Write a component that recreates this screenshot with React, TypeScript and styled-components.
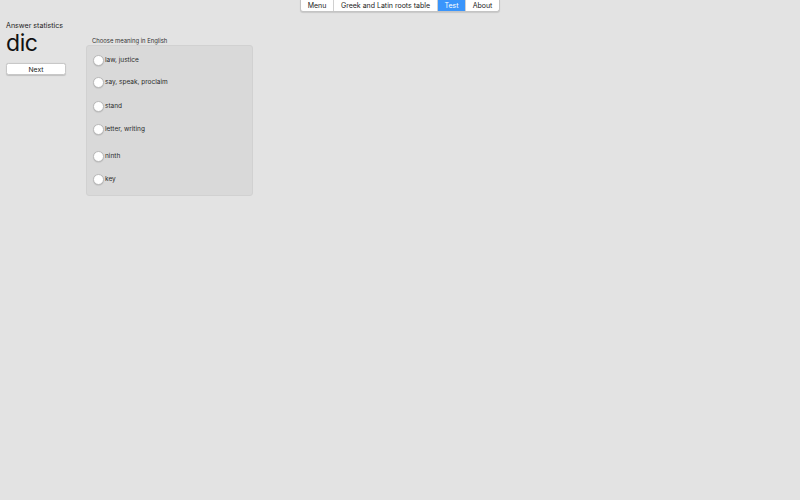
import React from "react";
import styled, { createGlobalStyle } from "styled-components";

const GlobalStyle = createGlobalStyle`
  html, body {
    margin: 0;
    padding: 0;
    background: #e3e3e3;
    font-family: Inter, "Liberation Sans", sans-serif;
    color: #1d1d1d;
  }
`;

const Page = styled.div`
  width: 800px;
  height: 500px;
  display: flex;
  flex-direction: column;
  overflow: hidden;
`;

const TabBarRow = styled.div`
  display: flex;
  justify-content: center;
  height: 12px;
`;

const TabBar = styled.div`
  display: flex;
  height: 11px;
  border: 1px solid #c4c4c4;
  border-top: none;
  border-radius: 0 0 3px 3px;
  background: #ffffff;
  overflow: hidden;
  box-shadow: 0 0.5px 1px rgba(0, 0, 0, 0.12);
`;

const Tab = styled.div<{ $active?: boolean; $width: number }>`
  width: ${(p) => p.$width}px;
  display: flex;
  align-items: center;
  justify-content: center;
  font-size: 7px;
  color: ${(p) => (p.$active ? "#ffffff" : "#222")};
  background: ${(p) => (p.$active ? "#3a95fb" : "transparent")};
  border-left: 1px solid #d0d0d0;
  &:first-child {
    border-left: none;
  }
`;

const Body = styled.div`
  display: flex;
  padding: 9px 0 0 6px;
  gap: 20px;
`;

const LeftColumn = styled.div`
  width: 60px;
  display: flex;
  flex-direction: column;
`;

const StatsLabel = styled.div`
  font-size: 7.1px;
  line-height: 10px;
  white-space: nowrap;
`;

const Word = styled.div`
  font-size: 23px;
  line-height: 25px;
  color: #111;
  letter-spacing: -0.4px;
`;

const NextButton = styled.button`
  margin-top: 7px;
  width: 60px;
  height: 12px;
  padding: 0;
  background: #ffffff;
  border: 0.5px solid #c8c8c8;
  border-radius: 2.5px;
  box-shadow: 0 0.5px 1px rgba(0, 0, 0, 0.15);
  font-family: inherit;
  font-size: 6.8px;
  color: #222;
`;

const QuizColumn = styled.div`
  display: flex;
  flex-direction: column;
  padding-top: 16px;
`;

const QuizTitle = styled.div`
  font-size: 5.9px;
  line-height: 8px;
  margin-left: 6px;
  color: #333;
`;

const QuizPanel = styled.div`
  width: 167px;
  height: 151px;
  box-sizing: border-box;
  background: #d9d9d9;
  border: 1px solid #d1d1d1;
  border-radius: 3px;
  display: flex;
  flex-direction: column;
  padding-left: 6px;
`;

const Option = styled.label<{ $top: number }>`
  display: flex;
  align-items: center;
  gap: 1px;
  height: 12px;
  margin-top: ${(p) => p.$top}px;
  font-size: 6.5px;
  color: #2a2a2a;
`;

const RadioDot = styled.span`
  width: 9px;
  height: 9px;
  border-radius: 50%;
  background: #ffffff;
  border: 0.5px solid #b9b9b9;
  box-shadow: 0 0.5px 1px rgba(0, 0, 0, 0.15);
`;

const tabs = [
  { label: "Menu", width: 32 },
  { label: "Greek and Latin roots table", width: 103 },
  { label: "Test", width: 27, active: true },
  { label: "About", width: 33 },
];

const options = [
  { text: "law, justice", top: 8 },
  { text: "say, speak, proclaim", top: 10 },
  { text: "stand", top: 12 },
  { text: "letter, writing", top: 11 },
  { text: "ninth", top: 15 },
  { text: "key", top: 11 },
];

export default function App() {
  return (
    <Page>
      <GlobalStyle />
      <TabBarRow>
        <TabBar>
          {tabs.map((t) => (
            <Tab key={t.label} $active={t.active} $width={t.width}>
              {t.label}
            </Tab>
          ))}
        </TabBar>
      </TabBarRow>
      <Body>
        <LeftColumn>
          <StatsLabel>Answer statistics</StatsLabel>
          <Word>dic</Word>
          <NextButton>Next</NextButton>
        </LeftColumn>
        <QuizColumn>
          <QuizTitle>Choose meaning in English</QuizTitle>
          <QuizPanel>
            {options.map((o) => (
              <Option key={o.text} $top={o.top}>
                <RadioDot />
                {o.text}
              </Option>
            ))}
          </QuizPanel>
        </QuizColumn>
      </Body>
    </Page>
  );
}
